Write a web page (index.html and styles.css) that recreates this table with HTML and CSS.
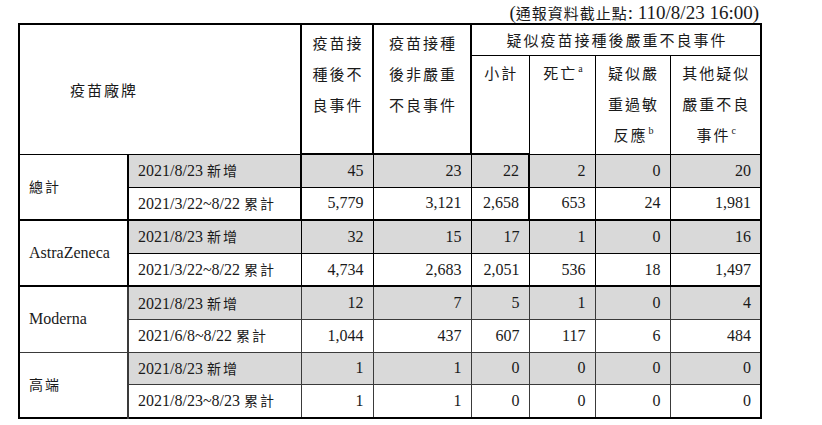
FILE: index.html
```html
<!DOCTYPE html>
<html lang="zh-Hant">
<head>
<meta charset="utf-8">
<title>疑似疫苗接種後不良事件</title>
<link rel="stylesheet" href="styles.css">
</head>
<body>
<div class="page">
  <p class="note">(<span class="zh">通報資料截止點</span>: 110/8/23 16:00)</p>
  <table class="t">
    <colgroup>
      <col class="c1"><col class="c2"><col class="c3"><col class="c4">
      <col class="c5"><col class="c6"><col class="c7"><col class="c8">
    </colgroup>
    <thead>
      <tr class="h1">
        <th rowspan="2" colspan="2" class="brand">疫苗廠牌</th>
        <th rowspan="2" class="hv">疫苗接<br>種後不<br>良事件</th>
        <th rowspan="2" class="hv">疫苗接種<br>後非嚴重<br>不良事件</th>
        <th colspan="4" class="grp">疑似疫苗接種後嚴重不良事件</th>
      </tr>
      <tr class="h2">
        <th class="sub sl">小計</th>
        <th class="sub">死亡<sup>a</sup></th>
        <th class="sub">疑似嚴<br>重過敏<br>反應<sup>b</sup></th>
        <th class="sub">其他疑似<br>嚴重不良<br>事件<sup>c</sup></th>
      </tr>
    </thead>
    <tbody class="g gt">
      <tr class="new">
        <td rowspan="2" class="lbl"><span class="zh">總計</span></td>
        <td class="per">2021/8/23 <span class="zh">新增</span></td>
        <td class="bt bl">45</td><td class="bt">23</td><td class="bt br">22</td>
        <td>2</td><td>0</td><td>20</td>
      </tr>
      <tr class="cum">
        <td class="per">2021/3/22~8/22 <span class="zh">累計</span></td>
        <td class="bb bl">5,779</td><td class="bb">3,121</td><td class="bb br">2,658</td>
        <td>653</td><td>24</td><td>1,981</td>
      </tr>
    </tbody>
    <tbody class="g ga">
      <tr class="new">
        <td rowspan="2" class="lbl">AstraZeneca</td>
        <td class="per">2021/8/23 <span class="zh">新增</span></td>
        <td>32</td><td>15</td><td>17</td><td>1</td><td>0</td><td>16</td>
      </tr>
      <tr class="cum">
        <td class="per">2021/3/22~8/22 <span class="zh">累計</span></td>
        <td>4,734</td><td>2,683</td><td>2,051</td><td>536</td><td>18</td><td>1,497</td>
      </tr>
    </tbody>
    <tbody class="g gm">
      <tr class="new">
        <td rowspan="2" class="lbl">Moderna</td>
        <td class="per">2021/8/23 <span class="zh">新增</span></td>
        <td>12</td><td>7</td><td>5</td><td>1</td><td>0</td><td>4</td>
      </tr>
      <tr class="cum">
        <td class="per">2021/6/8~8/22 <span class="zh">累計</span></td>
        <td>1,044</td><td>437</td><td>607</td><td>117</td><td>6</td><td>484</td>
      </tr>
    </tbody>
    <tbody class="g gm">
      <tr class="new">
        <td rowspan="2" class="lbl"><span class="zh">高端</span></td>
        <td class="per">2021/8/23 <span class="zh">新增</span></td>
        <td>1</td><td>1</td><td>0</td><td>0</td><td>0</td><td>0</td>
      </tr>
      <tr class="cum">
        <td class="per">2021/8/23~8/23 <span class="zh">累計</span></td>
        <td>1</td><td>1</td><td>0</td><td>0</td><td>0</td><td>0</td>
      </tr>
    </tbody>
  </table>
</div>
</body>
</html>
```

FILE: styles.css
```css
html, body {
  margin: 0;
  padding: 0;
  background: #ffffff;
}

body {
  color: #1a1a1a;
  font-family: "Liberation Serif", "Noto Sans CJK TC", serif;
  font-size: 16px;
}

.page {
  padding-left: 18px;
  width: 742px;
}

.note {
  margin: 0;
  height: 23px;
  line-height: 25px;
  font-size: 19px;
  text-align: right;
  padding-right: 1px;
}

.zh {
  font-family: "Noto Sans CJK TC", sans-serif;
  font-size: 14px;
  font-weight: 400;
  letter-spacing: 2px;
}

.note .zh {
  font-size: 15px;
  letter-spacing: 1px;
}

.t {
  border-collapse: collapse;
  table-layout: fixed;
  width: 742px;
  border: 2px solid #000;
}

.c1 { width: 109px; }
.c2 { width: 173px; }
.c3 { width: 72px; }
.c4 { width: 98px; }
.c5 { width: 58px; }
.c6 { width: 66px; }
.c7 { width: 75px; }
.c8 { width: 91px; }

th, td {
  border: 1px solid #000;
  padding: 0;
}

th {
  font-family: "Noto Sans CJK TC", sans-serif;
  font-size: 15px;
  font-weight: 400;
  letter-spacing: 2px;
  line-height: 31px;
  vertical-align: top;
  text-align: center;
  padding-left: 2px;
}

.h1 th {
  height: 30px;
}

.h2 th {
  height: 96px;
}

th.brand {
  text-align: left;
  vertical-align: middle;
  padding-left: 50px;
  border-right-width: 2px;
}

th.hv {
  border-left-width: 2px;
  border-right-width: 2px;
  padding-top: 2px;
}

th.grp {
  vertical-align: middle;
  line-height: 30px;
}

th.sub {
  padding-top: 1px;
}

th.sl {
  border-left-width: 2px;
}

sup {
  font-family: "Liberation Serif", serif;
  font-size: 10px;
  letter-spacing: 0;
  vertical-align: 7px;
  line-height: 0;
  margin-left: 1px;
}

td {
  height: 31.6px;
  text-align: right;
  padding-right: 9px;
  vertical-align: middle;
  line-height: 20px;
}

tr.new td {
  background: #d9d9d9;
}

tr.new td.lbl {
  background: #ffffff;
}

td.lbl {
  text-align: left;
  padding-left: 9px;
  padding-right: 0;
  border-right-width: 2px;
}

td.per {
  text-align: left;
  padding-left: 9px;
  padding-right: 0;
}

.gt td.lbl,
.ga td.lbl {
  border-bottom-width: 2px;
}

.gt tr.cum td,
.ga tr.cum td {
  border-bottom-width: 2px;
}

td.bt { border-top-width: 2px; }
td.bb { border-bottom-width: 2px; }
td.bl { border-left-width: 2px; }
td.br { border-right-width: 2px; }

.gm td {
  border-color: #3a3a3a;
}
```
